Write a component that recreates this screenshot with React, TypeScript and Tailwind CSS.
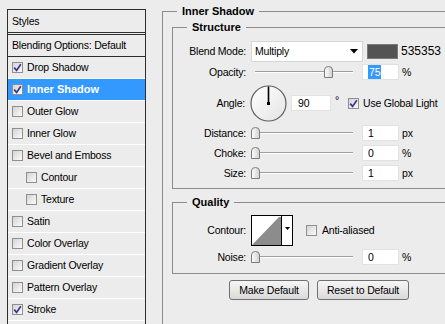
import React from "react";

const Check = ({ checked }: { checked?: boolean }) => (
  <span className="w-[11px] h-[11px] shrink-0 border border-[#8f8f8f] bg-linear-to-br from-[#d4d4d4] to-[#fbfbfb] flex items-center justify-center">
    {checked && (
      <svg width="9" height="9" viewBox="0 0 9 9">
        <path d="M1.2 4.6 L3.6 7.4 L7.8 1.2" stroke="#3a3590" strokeWidth="1.7" fill="none" />
      </svg>
    )}
  </span>
);

const items: { label: string; checked?: boolean; active?: boolean; indent?: boolean }[] = [
  { label: "Drop Shadow", checked: true },
  { label: "Inner Shadow", checked: true, active: true },
  { label: "Outer Glow" },
  { label: "Inner Glow" },
  { label: "Bevel and Emboss" },
  { label: "Contour", indent: true },
  { label: "Texture", indent: true },
  { label: "Satin" },
  { label: "Color Overlay" },
  { label: "Gradient Overlay" },
  { label: "Pattern Overlay" },
  { label: "Stroke", checked: true },
  { label: "" },
];

const Thumb = () => (
  <svg width="9" height="12" viewBox="0 0 9 12">
    <defs>
      <linearGradient id="tg" x1="0" y1="0" x2="1" y2="0">
        <stop offset="0" stopColor="#ffffff" />
        <stop offset="1" stopColor="#d0d0d0" />
      </linearGradient>
    </defs>
    <path d="M0.5 4 Q0.5 0.5 4.5 0.5 Q8.5 0.5 8.5 4 L8.5 11.5 L0.5 11.5 Z" fill="url(#tg)" stroke="#7c7c7c" />
  </svg>
);

const Slider = ({ value }: { value: number }) => (
  <div className="relative w-[103px] h-[16px] flex items-center">
    <div className="ml-[4px] w-[98px] h-[2px] border-t border-[#9f9f9f] bg-white" />
    <div className="absolute top-[2px]" style={{ left: `${Math.round(value * 0.73)}px` }}>
      <Thumb />
    </div>
  </div>
);

const Input = ({ children }: { children: React.ReactNode }) => (
  <div className="w-[37px] h-[16px] bg-white border border-[#e2e2e2] flex items-center pl-[5px]">
    {children}
  </div>
);

const Label = ({ children }: { children: React.ReactNode }) => (
  <div className="w-[73px] text-right shrink-0 mr-[5px]">{children}</div>
);

const SliderRow = ({ label, value, unit, v }: { label: string; value: string; unit: string; v: number }) => (
  <div className="h-[16px] flex items-center mt-[4px]">
    <Label>{label}</Label>
    <Slider value={v} />
    <div className="ml-[8px]">
      <Input>{value}</Input>
    </div>
    <span className="ml-[3px]">{unit}</span>
  </div>
);

export default function App() {
  return (
    <div className="w-[445px] h-[324px] overflow-hidden bg-[#ececec] text-black text-[10.5px] tracking-[-0.2px] leading-[13px] font-['Liberation_Sans',Arial,sans-serif] flex items-start pt-[5px]">
      {/* Left styles list */}
      <div className="mt-[4px] ml-[7px] w-[139px] h-[400px] shrink-0 border border-[#2e2e2e] bg-[#ececec]">
        <div className="h-[23px] flex items-center pl-[4px] border-b border-[#2e2e2e]">Styles</div>
        <div className="mt-[1px] h-[23px] flex items-center pl-[4px] border-y border-[#2e2e2e]">Blending Options: Default</div>
        {items.map((it, i) => (
          <div
            key={i}
            className={`h-[22px] flex items-center gap-[4px] border-b border-white ${it.indent ? "pl-[18px]" : "pl-[4px]"} ${it.active ? "bg-[#3399ff] text-white font-bold text-[11px] tracking-normal" : ""}`}
          >
            {it.label && <Check checked={it.checked} />}
            <span>{it.label}</span>
          </div>
        ))}
      </div>

      {/* Right panel */}
      <fieldset className="ml-[16px] w-[320px] h-[360px] shrink-0 border border-[#8c8c8c]">
        <legend className="ml-[14px] px-[5px] font-bold text-[11px] tracking-normal leading-[13px]">Inner Shadow</legend>

        <fieldset className="mt-[3px] ml-[9px] w-[310px] border border-[#8c8c8c] pt-[7px] pb-[7px]">
          <legend className="ml-[14px] px-[5px] font-bold text-[11px] tracking-normal leading-[13px]">Structure</legend>

          <div className="h-[21px] flex items-center">
            <Label>Blend Mode:</Label>
            <div className="w-[112px] h-[21px] bg-white border border-[#d6d6d6] flex items-center justify-between pl-[3px] pr-[4px]">
              <span>Multiply</span>
              <svg width="8" height="5" viewBox="0 0 8 5">
                <path d="M0 0 H8 L4 4.5 Z" fill="#000" />
              </svg>
            </div>
            <div className="ml-[4px] w-[31px] h-[15px] bg-[#535353] border border-[#7a7a7a]" />
            <span className="ml-[3px] text-[12px] tracking-normal">535353</span>
          </div>

          <div className="h-[16px] flex items-center mt-[2px]">
            <Label>Opacity:</Label>
            <Slider value={100} />
            <div className="ml-[8px]">
              <Input>
                <span className="bg-[#3399ff] text-white px-[1px] leading-[14px]">75</span>
              </Input>
            </div>
            <span className="ml-[3px]">%</span>
          </div>

          <div className="h-[36px] flex items-center mt-[5px]">
            <div className="w-[72px] text-right shrink-0 mr-[5px]">Angle:</div>
            <svg width="37" height="37" viewBox="0 0 37 37">
              <defs>
                <linearGradient id="dg" x1="0" y1="0" x2="1" y2="1">
                  <stop offset="0" stopColor="#ffffff" />
                  <stop offset="1" stopColor="#e4e4e4" />
                </linearGradient>
              </defs>
              <circle cx="18.5" cy="18.5" r="17.5" fill="url(#dg)" stroke="#5e5e5e" strokeWidth="1.2" />
              <line x1="18.5" y1="18.5" x2="18.5" y2="1.5" stroke="#000" strokeWidth="1.6" />
              <rect x="17" y="17" width="3" height="3" fill="#000" />
            </svg>
            <div className="ml-[4px] w-[40px] h-[16px] bg-white border border-[#e2e2e2] flex items-center pl-[6px]">90</div>
            <span className="ml-[4px] self-start mt-[9px]">°</span>
            <div className="ml-[9px] flex items-center gap-[4px]">
              <Check checked />
              <span>Use Global Light</span>
            </div>
          </div>

          <SliderRow label="Distance:" value="1" unit="px" v={0} />
          <SliderRow label="Choke:" value="0" unit="%" v={0} />
          <SliderRow label="Size:" value="1" unit="px" v={0} />
        </fieldset>

        <fieldset className="mt-[7px] ml-[9px] w-[310px] border border-[#8c8c8c] pt-[6px] pb-[8px]">
          <legend className="ml-[14px] px-[5px] font-bold text-[11px] tracking-normal leading-[13px]">Quality</legend>
          <div className="h-[30px] flex items-center">
            <Label>Contour:</Label>
            <div className="w-[42px] h-[31px] border border-black bg-white flex">
              <svg width="29" height="29" viewBox="0 0 29 29" className="shrink-0">
                <path d="M0 29 L27 1 L29 1 L29 29 Z" fill="#8c8c8c" />
              </svg>
              <div className="w-[11px] border-l border-black flex justify-center pt-[11px]">
                <svg width="5" height="3" viewBox="0 0 5 3">
                  <path d="M0 0 H5 L2.5 3 Z" fill="#000" />
                </svg>
              </div>
            </div>
            <div className="ml-[13px] flex items-center gap-[5px]">
              <Check />
              <span>Anti-aliased</span>
            </div>
          </div>
          <SliderRow label="Noise:" value="0" unit="%" v={0} />
        </fieldset>

        <div className="mt-[6px] ml-[66px] flex gap-[8px]">
          <button className="w-[80px] h-[20px] rounded-[3px] border border-[#707070] bg-linear-to-b from-[#f6f6f6] to-[#dadada]">
            Make Default
          </button>
          <button className="w-[92px] h-[20px] rounded-[3px] border border-[#707070] bg-linear-to-b from-[#f6f6f6] to-[#dadada]">
            Reset to Default
          </button>
        </div>
      </fieldset>
    </div>
  );
}
